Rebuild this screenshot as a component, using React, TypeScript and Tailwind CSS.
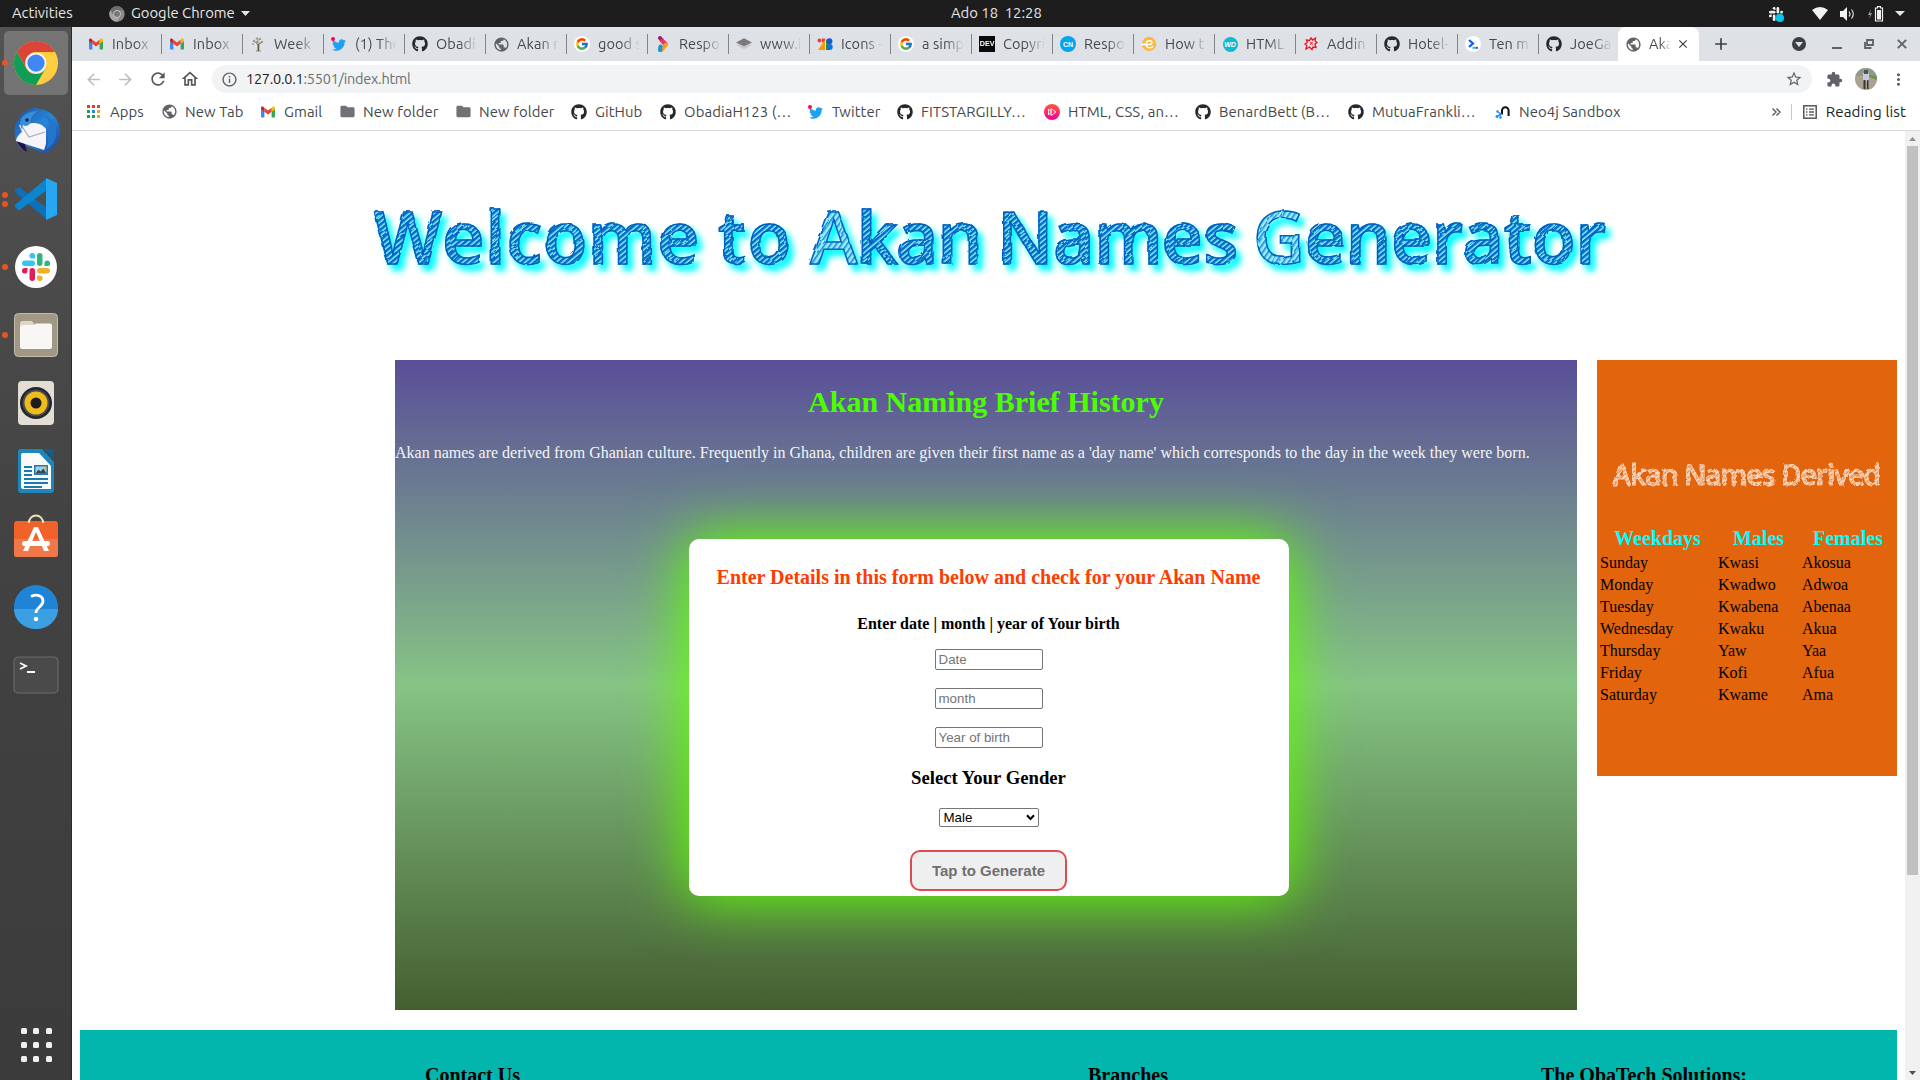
import React from "react";
import { FaGithub, FaTwitter } from "react-icons/fa";
import { FcGoogle } from "react-icons/fc";
import {
  MdPublic,
  MdRefresh,
  MdOutlineHome,
  MdStarBorder,
  MdExtension,
  MdMoreVert,
  MdInfoOutline,
  MdFolder,
  MdArrowBack,
  MdArrowForward,
  MdClose,
  MdAdd,
} from "react-icons/md";

/* ---------- small brand icons ---------- */

const Gmail = () => (
  <svg width="16" height="16" viewBox="0 0 16 16">
    <path d="M1 4.200v8.200c0 .6.5 1 1 1h2.400V7.600L1 5z" fill="#4285f4" />
    <path d="M11.600 13.400H14c.6 0 1-.5 1-1V4.600l-3.400 2.800z" fill="#34a853" />
    <path d="M11.600 3.900v3.900L15 5.200V4c0-1.400-1.500-2-2.500-1.200z" fill="#fbbc04" />
    <path d="M4.400 7.700V3.700L8 6.400l3.600-2.700v4L8 10.500z" fill="#ea4335" />
    <path d="M1 4v1.200l3.400 2.600V3.700l-.9-.8C2.500 2.200 1 2.700 1 4z" fill="#c5221f" />
  </svg>
);
const Github = () => <FaGithub size={16} color="#24292e" />;
const Globe = () => <MdPublic size={17} color="#5f6368" className="shrink-0" />;
const Twitter = () => (
  <span className="relative top-px flex">
    <FaTwitter size={14} color="#1da1f2" />
    <span className="absolute -left-px -top-px size-[4px] rounded-full bg-[#f5075f]" />
  </span>
);
const Google = () => (
  <span className="flex size-4 items-center justify-center rounded-full bg-white">
    <FcGoogle size={14} />
  </span>
);
const Tree = () => (
  <svg width="16" height="16" viewBox="0 0 16 16">
    <g fill="#a3a38c">
      <circle cx="4" cy="5" r="1.300" /><circle cx="7" cy="2.500" r="1.300" /><circle cx="10" cy="3" r="1.300" />
      <circle cx="12" cy="6" r="1.200" /><circle cx="3" cy="8" r="1" /><circle cx="7" cy="6" r="1.200" /><circle cx="10" cy="7" r="1" />
    </g>
    <path d="M8 15V8M8 9L4 5M8 9l4-3M8 8V3M6 15h5" stroke="#857a64" strokeWidth=".8" fill="none" />
    <path d="M7.700 8h1.600v7H7.700z" fill="#6b5a45" />
  </svg>
);
const Chevron = () => (
  <svg width="16" height="16" viewBox="0 0 16 16">
    <path d="M5 2l5 6" stroke="#a02070" strokeWidth="4" strokeLinecap="round" />
    <path d="M7 5l4 3" stroke="#ee3a5a" strokeWidth="4" strokeLinecap="round" />
    <path d="M11 8.500L6.500 14" stroke="#ff9a20" strokeWidth="4" strokeLinecap="round" />
    <path d="M5.500 10.500L5 14" stroke="#1793d8" strokeWidth="4" strokeLinecap="round" />
  </svg>
);
const Layers = () => (
  <svg width="17" height="16" viewBox="0 0 17 16">
    <path d="M0 9l8.500-3.500L17 9l-8.500 4.500z" fill="#c9c9c9" />
    <path d="M0 6.500L8.500 2 17 6.500 8.500 10.500z" fill="#7a7a7a" />
  </svg>
);
const Iconify = () => (
  <svg width="16" height="16" viewBox="0 0 16 16">
    <circle cx="2.500" cy="4.500" r="2" fill="#ea4335" />
    <path d="M5 2.500h3v4H5z" fill="#ea4335" />
    <path d="M1 14L8 4v10z" fill="#ff9800" />
    <path d="M9 2.500l3 5.500-3 6z" fill="#1e9e45" />
    <circle cx="12.500" cy="5.200" r="2.900" fill="#1a55d8" />
    <path d="M9 9h4v5H9z" fill="#1e8e3e" />
    <circle cx="12.800" cy="11" r="2.900" fill="#0a72e0" />
  </svg>
);
const Dev = () => (
  <span className="flex size-4 items-center justify-center bg-[#0a0a0a]">
    <span className="scale-x-90 font-['Liberation_Sans',sans-serif] text-[8px] font-bold leading-none text-white">DEV</span>
  </span>
);
const Cn = () => (
  <span className="flex size-4 items-center justify-center rounded-full bg-[#03a5f0] font-['Liberation_Sans',sans-serif] text-[7px] font-bold leading-none text-white">
    CN
  </span>
);
const Educative = () => (
  <svg width="16" height="16" viewBox="0 0 16 16">
    <circle cx="8" cy="8" r="7.200" fill="#fdb843" />
    <path d="M0 8.500h8c4 0 3.800-3.800.8-3.800-4.800 0-4.800 7 0 7 1.600 0 2.600-.6 3.400-1.500" stroke="#fff" strokeWidth="1.400" fill="none" />
  </svg>
);
const Wd = () => (
  <span className="flex size-[15px] items-center justify-center rounded-full bg-[#0fb9cf] font-['Liberation_Sans',sans-serif] text-[7px] font-bold italic leading-none text-white">
    WD
  </span>
);
const Star = () => (
  <svg width="16" height="16" viewBox="0 0 16 16">
    <path
      d="M8 2l1.500 2L12.500 2 12 5 14 6.500 12 8l1 3.500-3-.5L9 13.500 6.500 11 3 13l.8-3.500L2 8l2.300-1.500L3.500 4l3 .5z"
      fill="none" stroke="#ee1122" strokeWidth="1.300"
    />
    <path d="M7 6l3 2.500M9.500 6L7 9" stroke="#ee1122" strokeWidth=".9" />
  </svg>
);
const Prompt = () => (
  <span className="flex size-4 items-center justify-center rounded-full bg-white">
    <svg width="12" height="12" viewBox="0 0 12 12">
      <path d="M2 2l4 3.500L2 9" stroke="#0a5cf5" strokeWidth="2.200" fill="none" />
      <path d="M5.500 9.800h3" stroke="#15c8e8" strokeWidth="2" />
      <path d="M8.500 9.800H11" stroke="#8a2be2" strokeWidth="2" />
    </svg>
  </span>
);
const PlayIcon = () => (
  <svg width="16" height="16" viewBox="0 0 16 16">
    <defs>
      <linearGradient id="play" x1="0" y1="0" x2="0" y2="1">
        <stop offset="0" stopColor="#ff5a3c" />
        <stop offset="1" stopColor="#f5009a" />
      </linearGradient>
    </defs>
    <circle cx="8" cy="8" r="8" fill="url(#play)" />
    <path d="M7 4.500v7L12 8zM4.500 5v6M4.500 5l3 3-3 3" stroke="#fff" strokeWidth=".9" fill="none" />
  </svg>
);
const Neo = () => (
  <svg width="16" height="16" viewBox="0 0 16 16">
    <path d="M7 10.500V6.500a3.300 3.300 0 016.600 0V12" stroke="#111" strokeWidth="2" fill="none" />
    <path d="M3 8l3 2L2 12.500M5 10L5.500 13.500" stroke="#1a8cff" strokeWidth="1.200" fill="none" />
    <circle cx="2.500" cy="7.500" r="1.200" fill="#1a8cff" /><circle cx="5.500" cy="10" r="1.200" fill="#1a8cff" />
    <circle cx="2" cy="12.500" r="1.500" fill="#1a8cff" /><circle cx="5.500" cy="13.500" r="1.200" fill="#1a8cff" />
  </svg>
);
const AppsGrid = () => (
  <svg width="14" height="14" viewBox="0 0 14 14">
    <path d="M0 0h3v3H0zM5 0h3v3H5zM10 0h3v3h-3z" fill="#ea3a30" />
    <path d="M0 5h3v3H0z" fill="#1e9e58" /><path d="M5 5h3v3H5z" fill="#2a80f0" /><path d="M10 5h3v3h-3z" fill="#f9a01b" />
    <path d="M0 10h3v3H0zM5 10h3v3H5z" fill="#1e9e58" /><path d="M10 10h3v3h-3z" fill="#f9a01b" />
  </svg>
);
const Folder = () => <MdFolder size={17} color="#6e7175" className="shrink-0" />;

/* ---------- dock icons ---------- */

const Chrome = ({ size, mono = false }: { size: number; mono?: boolean }) => (
  <svg width={size} height={size} viewBox="0 0 48 48">
    <circle cx="24" cy="24" r="23" fill={mono ? "#8a8a8a" : "#ffcd40"} />
    <path d="M4.100 12.500A23 23 0 0143.900 12.500H24a11.500 11.500 0 00-10 17.200z" fill={mono ? "#6f6f6f" : "#db4437"} />
    <path d="M4.100 12.500A23 23 0 0024 47l10-17.300a11.500 11.500 0 01-20 0z" fill={mono ? "#a5a5a5" : "#0f9d58"} />
    <circle cx="24" cy="24" r="11" fill={mono ? "#d0d0d0" : "#f1f1f1"} />
    <circle cx="24" cy="24" r="9" fill={mono ? "#777" : "#4285f4"} />
  </svg>
);
const Thunderbird = () => (
  <svg width="48" height="48" viewBox="0 0 48 48">
    <defs>
      <linearGradient id="tb" x1="0" y1="0" x2="1" y2="1">
        <stop offset="0" stopColor="#1a4fa8" /><stop offset=".5" stopColor="#2a86d8" /><stop offset="1" stopColor="#1c3f9a" />
      </linearGradient>
    </defs>
    <path d="M3 20C1 31 6 42 15 45l-3-7 20 8c9-2 16-11 16-22C48 12 39 3 27 2c-2-2-7-1-8 0C12 4 9 7 8 11c-3 3-5 6-5 9z" fill="url(#tb)" />
    <path d="M4 32c2 6 6 11 11 13l-2-8z" fill="#20124d" />
    <path d="M7 18l14-2c6 0 10 2 13 6v15l-2 6L4 34c0-3 4-8 6-9z" fill="#f5f5f7" />
    <path d="M9 18l8 12 16-5" stroke="#aab" strokeWidth="1.200" fill="none" />
    <path d="M8 17c0-8 8-13 18-13-5 3-7 6-8 12-1 3-5 4-7 2l-1 5z" fill="#3a8fd8" />
    <path d="M30 8c8 4 10 12 4 20 4 4 2 10 0 14 8-4 11-12 10-18C44 15 38 9 30 8z" fill="#2277cc" />
    <circle cx="15" cy="13" r="1.800" fill="#1a2350" />
  </svg>
);
const VsCode = () => (
  <svg width="44" height="44" viewBox="0 0 44 44">
    <path d="M1 13l4-3 28 21v12L1 15z" fill="#0f6fb8" />
    <path d="M1 30l4 3.500L33 13V1L1 28z" fill="#0a85d0" />
    <path d="M32 1l11 5v32l-11 5z" fill="#27a6f2" />
  </svg>
);
const Slack = ({ size, white = false }: { size: number; white?: boolean }) => {
  const c = white ? ["#eee", "#eee", "#eee", "#eee"] : ["#36c5f0", "#2eb67d", "#ecb22e", "#e01e5a"];
  return (
    <svg width={size} height={size} viewBox="0 0 28 28">
      <g fill={c[0]}><rect x="0" y="7.500" width="13" height="5.500" rx="2.750" /><path d="M13 5.500H10.200A2.800 2.800 0 1113 2.700z" /></g>
      <g fill={c[1]}><rect x="15" y="0" width="5.500" height="13" rx="2.750" /><path d="M22.500 13v-2.800a2.800 2.800 0 112.800 2.800z" /></g>
      <g fill={c[2]}><rect x="15" y="15" width="13" height="5.500" rx="2.750" /><path d="M15 22.500h2.800a2.800 2.800 0 11-2.800 2.800z" /></g>
      <g fill={c[3]}><rect x="7.500" y="15" width="5.500" height="13" rx="2.750" /><path d="M5.500 15v2.800A2.800 2.800 0 112.700 15z" /></g>
    </svg>
  );
};
const Files = () => (
  <svg width="44" height="44" viewBox="0 0 44 44">
    <rect x=".5" y=".5" width="43" height="43" rx="4" fill="#a09884" stroke="#c4bca8" />
    <path d="M6 11q0-3 2-3h10l3 4h-4v4H6z" fill="#dcd6c8" />
    <path d="M6 14q0-2 2-2h12l2-1.500h14q2 0 2 2V34q0 2-2 2H8q-2 0-2-2z" fill="#f8f7f6" />
  </svg>
);
const Rhythmbox = () => (
  <svg width="36" height="44" viewBox="0 0 36 44">
    <rect width="36" height="44" rx="4" fill="#e2ded3" />
    <circle cx="18" cy="22" r="16" fill="#25252d" /><circle cx="18" cy="22" r="13.500" fill="#4a4a50" />
    <circle cx="18" cy="22" r="11.500" fill="#eebc1c" /><circle cx="18" cy="22" r="5.500" fill="#1e1e1e" />
  </svg>
);
const Writer = () => (
  <svg width="36" height="44" viewBox="0 0 36 44">
    <path d="M3 0h21l12 13v28q0 3-3 3H3q-3 0-3-3V3q0-3 3-3z" fill="#1c86bd" />
    <path d="M26 0h10v10z" fill="#0c5f90" />
    <path d="M5 4h16l12 13v23H5q-2 0-2-2V6q0-2 2-2z" fill="#f8fafa" />
    <path d="M6 18h8M6 22h8M6 26h8M6 30h24M6 34h24M6 38h18" stroke="#1c7ab0" strokeWidth="2" />
    <rect x="16" y="16" width="14" height="10" fill="#1c7ab0" /><rect x="17.500" y="17.500" width="11" height="7" fill="#9fd0ee" />
    <path d="M17.500 24.500l3-4 2 2 3-3 3 5z" fill="#444" />
    <path d="M25 17.500h3.500V21z" fill="#e8b020" />
  </svg>
);
const Software = () => (
  <svg width="44" height="44" viewBox="0 0 44 44" className="relative -top-[3px]">
    <path d="M15 9C15-1 29-1 29 9" stroke="#f6dfb4" strokeWidth="2" fill="none" />
    <rect y="7" width="44" height="36" rx="3" fill="#f0622a" /><path d="M0 25h44v15q0 3-3 3H3q-3 0-3-3z" fill="#f07848" />
    <path d="M15 9V6.500M29 9V6.500" stroke="#f6dfb4" strokeWidth="2" />
    <path d="M20 13h4l11 24h-5l-8-19-8 19H9z" fill="#fff" /><rect x="8" y="27" width="28" height="5" rx="2.500" fill="#fff" />
  </svg>
);
const Help = () => (
  <svg width="44" height="44" viewBox="0 0 44 44">
    <circle cx="22" cy="22" r="22" fill="#1f84d6" /><path d="M0 24a22 20 0 0044 0z" fill="#3b9fe2" />
    <path d="M17 11.500c6-3 12-.5 12 4.500 0 6-7 6-7 12" stroke="#fff" strokeWidth="2.800" fill="none" />
    <circle cx="22" cy="34" r="2.300" fill="#fff" />
  </svg>
);
const Terminal = () => (
  <svg width="46" height="38" viewBox="0 0 46 38">
    <rect x="1" y="1" width="44" height="36" rx="4" fill="#4a4a4a" stroke="#6c6c6c" />
    <path d="M7 7l6 3-6 3M14 16h8" stroke="#fff" strokeWidth="1.800" fill="none" />
  </svg>
);

const dock = [
  { icon: <Chrome size={46} />, dots: 1, active: true },
  { icon: <Thunderbird />, dots: 0 },
  { icon: <VsCode />, dots: 2 },
  {
    icon: (
      <span className="flex size-[42px] items-center justify-center rounded-full bg-white">
        <Slack size={28} />
      </span>
    ),
    dots: 1,
  },
  { icon: <Files />, dots: 1 },
  { icon: <Rhythmbox />, dots: 0 },
  { icon: <Writer />, dots: 0 },
  { icon: <Software />, dots: 0 },
  { icon: <Help />, dots: 0 },
  { icon: <Terminal />, dots: 0 },
];

const tabs: [React.ReactNode, string][] = [
  [<Gmail />, "Inbox"], [<Gmail />, "Inbox"], [<Tree />, "Week"], [<Twitter />, "(1) The"], [<Github />, "Obadi"],
  [<Globe />, "Akan n"], [<Google />, "good s"], [<Chevron />, "Respo"], [<Layers />, "www.i"], [<Iconify />, "Icons -"],
  [<Google />, "a simp"], [<Dev />, "Copyri"], [<Cn />, "Respo"], [<Educative />, "How t"], [<Wd />, "HTML"],
  [<Star />, "Addin"], [<Github />, "Hotel-"], [<Prompt />, "Ten m"], [<Github />, "JoeGa"],
];

const bookmarks: [React.ReactNode, string, string][] = [
  [<AppsGrid />, "Apps", "w-[75px]"],
  [<Globe />, "New Tab", "w-[99px]"],
  [<Gmail />, "Gmail", "w-[79px]"],
  [<Folder />, "New folder", "w-[116px]"],
  [<Folder />, "New folder", "w-[116px]"],
  [<Github />, "GitHub", "w-[89px]"],
  [<Github />, "ObadiaH123 (…", "w-[148px]"],
  [<Twitter />, "Twitter", "w-[89px]"],
  [<Github />, "FITSTARGILLY…", "w-[147px]"],
  [<PlayIcon />, "HTML, CSS, an…", "w-[151px]"],
  [<Github />, "BenardBett (B…", "w-[153px]"],
  [<Github />, "MutuaFrankli…", "w-[147px]"],
  [<Neo />, "Neo4j Sandbox", "w-[160px]"],
];

const names = [
  ["Sunday", "Kwasi", "Akosua"], ["Monday", "Kwadwo", "Adwoa"], ["Tuesday", "Kwabena", "Abenaa"],
  ["Wednesday", "Kwaku", "Akua"], ["Thursday", "Yaw", "Yaa"], ["Friday", "Kofi", "Afua"], ["Saturday", "Kwame", "Ama"],
];

const hatch =
  "bg-[repeating-linear-gradient(140deg,#0a62c0_0px,#0a74cc_1.400px,#35c4f0_2.200px,#9af2fd_3.200px,#0a62c0_4px)] bg-clip-text text-transparent [-webkit-text-stroke:1.500px_#0660c0]";
const lightHatch =
  "bg-[repeating-linear-gradient(125deg,#1c86d2_0px,#5fd6f6_1.400px,#b4f6ff_3.200px,#1c86d2_4.500px)] bg-clip-text text-transparent [-webkit-text-stroke:1.500px_#0660c0]";

/* [lightly shaded capital, remaining letters, slot classes] */
const titleWords: [string, string, string][] = [
  ["", "Welcome", "w-[344px] tracking-[1px]"],
  ["", "to", "w-[92px] tracking-[1px]"],
  ["A", "kan", "w-[187px] tracking-[-1px]"],
  ["", "Names", "w-[256px] tracking-[-0.500px]"],
  ["G", "enerator", "w-[400px] tracking-[-0.500px]"],
];

function TopBar() {
  return (
    <header className="flex h-[27px] shrink-0 items-center bg-[#1d1d1d] text-[14.800px] text-[#e6e6e6]">
      <div className="w-[109px] pl-3">Activities</div>
      <div className="flex w-[842px] items-center gap-[6px]">
        <Chrome size={16} mono />
        <span>Google Chrome</span>
        <svg width="9" height="5"><path d="M0 0h9L4.500 5z" fill="#e6e6e6" /></svg>
      </div>
      <div className="flex-1 whitespace-pre">Ado 18  12:28</div>
      <div className="flex items-center pr-[15px]">
        <span className="relative mr-[29px] flex">
          <Slack size={14} white />
          <span className="absolute -bottom-px -right-px size-[8px] rounded-full bg-[#00c8f5]" />
        </span>
        <svg width="16" height="13" viewBox="0 0 16 13" className="mr-3"><path d="M0 3Q8-3 16 3L8 13z" fill="#f2f2f2" /></svg>
        <svg width="16" height="14" viewBox="0 0 16 14" className="mr-3">
          <path d="M0 4h3l4-4v14l-4-4H0z" fill="#f2f2f2" />
          <path d="M9 4.500q2 2.500 0 5M11.500 2.500q3.500 4.500 0 9" stroke="#d8d8d8" strokeWidth="1.200" fill="none" />
        </svg>
        <svg width="16" height="16" viewBox="0 0 16 16" className="mr-[11px]">
          <path d="M3 3L0 9h2l-1 4 3-6H2z" fill="#999" />
          <path d="M7.500 2h2V.7h3V2h2v13h-7z" stroke="#f2f2f2" strokeWidth="1.200" fill="none" />
          <path d="M9 4h4v9.500H9z" fill="#f2f2f2" />
        </svg>
        <svg width="10" height="5"><path d="M0 0h10L5 5z" fill="#e6e6e6" /></svg>
      </div>
    </header>
  );
}

function Dock() {
  return (
    <nav className="flex w-[72px] shrink-0 flex-col border-r border-[#2b2b2b] bg-gradient-to-b from-[#535353] via-[#424242] to-[#3b3b3b] pt-[2px]">
      {dock.map((d, i) => (
        <div key={i} className="flex h-[68px] items-center">
          <div className="flex h-16 w-1 flex-col items-center justify-center">
            <div className="relative left-[3px] flex flex-col gap-[3px]">
              {Array.from({ length: d.dots }).map((_, k) => (
                <span key={k} className="size-[6px] rounded-full bg-[#e95420]" />
              ))}
            </div>
          </div>
          <div className={d.active ? "flex size-16 items-center justify-center rounded-[5px] bg-white/20" : "flex size-16 items-center justify-center"}>
            {d.icon}
          </div>
        </div>
      ))}
      <div className="mt-auto mb-[18px] ml-[21px] grid w-[31px] grid-cols-3 gap-x-[6px] gap-y-[6px]">
        {Array.from({ length: 9 }).map((_, i) => (
          <span key={i} className="mt-[2px] size-[6px] rounded-[1.500px] bg-[#f0f0f0]" />
        ))}
      </div>
    </nav>
  );
}

function TabStrip() {
  return (
    <div className="flex h-[34px] items-end bg-[#dee1e6] pl-[9px]">
      {tabs.map(([icon, label], i) => (
        <div key={i} className="flex h-[34px] w-[81px] shrink-0 items-center">
          <span className="ml-[7px] flex w-4 items-center justify-center">{icon}</span>
          <span className="ml-2 w-[42px] overflow-hidden whitespace-nowrap text-[14.500px] tracking-[0.100px] text-[#45494d] [mask-image:linear-gradient(to_right,black_55%,transparent)]">
            {label}
          </span>
          <span className={i < 18 ? "ml-auto h-5 w-px bg-[#808387]" : "ml-auto h-5 w-px"} />
        </div>
      ))}
      <div className="-ml-[2px] flex h-[34px] w-[81px] shrink-0 items-center rounded-t-[8px] bg-white">
        <span className="ml-[7px] flex w-4 justify-center"><Globe /></span>
        <span className="ml-2 w-[22px] overflow-hidden text-[14.500px] text-[#45494d] [mask-image:linear-gradient(to_right,black_50%,transparent)]">Aka</span>
        <MdClose size={14} color="#3c4043" className="ml-[5px]" />
      </div>
      <div className="flex h-[34px] flex-1 items-center text-[#3c4043]">
        <MdAdd size={20} className="ml-[12px]" />
        <span className="ml-[61px] flex size-[14px] items-center justify-center rounded-full bg-[#3c4043]">
          <svg width="8" height="5"><path d="M0 0h8L4 5z" fill="#dee1e6" /></svg>
        </span>
        <span className="ml-[26px] mt-2 h-[2px] w-[10px] bg-[#5f6368]" />
        <svg width="10" height="10" viewBox="0 0 10 10" className="ml-[22px]">
          <path d="M3 1h6v5H3z M1 3v6h6.500" stroke="#5f6368" strokeWidth="1.800" fill="none" />
        </svg>
        <svg width="10" height="10" viewBox="0 0 10 10" className="ml-[23px]">
          <path d="M.8.8l8.400 8.400M9.200.8L.8 9.200" stroke="#5f6368" strokeWidth="1.900" />
        </svg>
      </div>
    </div>
  );
}

function Toolbar() {
  return (
    <div className="flex h-9 items-center bg-white">
      <MdArrowBack size={19} color="#bcbec0" className="ml-3" />
      <MdArrowForward size={19} color="#bcbec0" className="ml-[13px]" />
      <MdRefresh size={20} color="#54585c" className="ml-[13px]" />
      <MdOutlineHome size={20} color="#54585c" className="ml-[12px]" />
      <div className="ml-[12px] flex h-7 w-[1600px] items-center rounded-full bg-[#f1f3f4] text-[14.500px]">
        <MdInfoOutline size={17} color="#5f6368" className="ml-[9px]" />
        <span className="ml-2 tracking-[-0.250px] text-[#202124]">127.0.0.1<span className="text-[#6b6f73]">:5501/index.html</span></span>
        <MdStarBorder size={18} color="#5f6368" className="ml-auto mr-[9px]" />
      </div>
      <MdExtension size={17} color="#5f6368" className="ml-[14px]" />
      <svg width="22" height="22" viewBox="0 0 22 22" className="ml-[12px] rounded-full">
        <path d="M0 0h22v22H0z" fill="#aaa292" /><path d="M0 0h22v8H0z" fill="#8f9a8c" /><path d="M14 7l8 1v4l-8-3z" fill="#6f9450" />
        <path d="M8 5h6v8H8z" fill="#c5cbd8" /><path d="M9 2h4v4H9z" fill="#55504c" /><path d="M8.500 12h2v9h-2zM12 12h1.500v9H12z" fill="#35353b" />
      </svg>
      <MdMoreVert size={19} color="#5f6368" className="ml-[12px]" />
    </div>
  );
}

function Bookmarks() {
  return (
    <div className="flex h-[34px] items-center border-b border-[#d9dadf] bg-white pb-[3px] pl-[14px] text-[14.900px] tracking-[0.080px] text-[#45494d]">
      {bookmarks.map(([icon, label, w], i) => (
        <div key={i} className={`flex shrink-0 items-center gap-2 whitespace-nowrap ${w}`}>
          <span className="flex w-4 shrink-0 justify-center">{icon}</span>
          <span>{label}</span>
        </div>
      ))}
      <div className="ml-auto flex items-center pr-[14px]">
        <svg width="9" height="8" viewBox="0 0 9 8"><path d="M.5.5L4 4 .5 7.500M4.500.5L8 4 4.500 7.500" stroke="#5f6368" strokeWidth="1.500" fill="none" /></svg>
        <span className="ml-[10px] h-4 w-px bg-[#c6c8cc]" />
        <svg width="14" height="14" viewBox="0 0 14 14" className="ml-[11px]">
          <rect x=".8" y=".8" width="12.400" height="12.400" stroke="#54585c" strokeWidth="1.500" fill="none" />
          <path d="M3 4.200h1.500M3 7h1.500M3 9.800h1.500M6 4.200h5M6 7h5M6 9.800h5" stroke="#54585c" strokeWidth="1.300" />
        </svg>
        <span className="ml-[9px] text-[15.200px] text-[#202124]">Reading list</span>
      </div>
    </div>
  );
}

function NameForm() {
  const field =
    "h-[21px] w-[108px] rounded-[2px] border border-[#767676] bg-white px-[3px] font-['Liberation_Sans',sans-serif] text-[13.333px] leading-none text-black placeholder:text-[#757575]";
  return (
    <form className="mx-auto mt-[77px] flex h-[357px] w-[600px] flex-col items-center rounded-[10px] bg-white pr-px shadow-[0_0_60px_3px_#5eff00]">
      <h2 className="mt-[27px] h-[23px] whitespace-nowrap text-[20px] font-bold leading-[23px] text-[#ff3c00]">
        Enter Details in this form below and check for your Akan Name
      </h2>
      <h4 className="mt-[26px] h-[18px] text-[16px] font-bold leading-[18px]">Enter date | month | year of Your birth</h4>
      <input className={`mt-[16px] ${field}`} placeholder="Date" />
      <input className={`mt-[18px] ${field}`} placeholder="month" />
      <input className={`mt-[18px] ${field}`} placeholder="Year of birth" />
      <h3 className="mt-[19px] h-[22px] text-[18.720px] font-bold leading-[22px]">Select Your Gender</h3>
      <div className="mt-[19px] flex h-[19px] w-[100px] items-center justify-between rounded-[2px] border border-[#767676] bg-white pl-[4px] pr-[3px] font-['Liberation_Sans',sans-serif] text-[13.333px] leading-none">
        <span>Male</span>
        <svg width="9" height="7" viewBox="0 0 9 7"><path d="M1 1.300l3.500 3.700L8 1.300" stroke="#000" strokeWidth="2" fill="none" /></svg>
      </div>
      <button className="mt-[23px] h-[41px] w-[157px] rounded-[10px] border-2 border-[#de4b50] bg-[#efefef] pt-px font-['Liberation_Sans',sans-serif] text-[15px] font-bold text-[#707070]">
        Tap to Generate
      </button>
    </form>
  );
}

function Page() {
  return (
    <main className="flex h-[949px] w-[1833px] flex-col overflow-hidden bg-white font-['Liberation_Serif',serif] text-black">
      <svg width="0" height="0" className="absolute">
        <filter id="sketch"><feTurbulence baseFrequency="0.06" numOctaves="2" seed="4" /><feDisplacementMap in="SourceGraphic" scale="3" /></filter>
        <filter id="sketch-fine"><feTurbulence baseFrequency="0.12" numOctaves="2" seed="2" /><feDisplacementMap in="SourceGraphic" scale="1.500" /></filter>
      </svg>
      <h1 className="flex h-[229px] shrink-0 whitespace-nowrap pl-[301px] pt-[54px] font-['Open_Sans',sans-serif] text-[72px] font-semibold leading-[100px] [filter:url(#sketch)_drop-shadow(5px_6px_3px_#00f6ff)]">
        {titleWords.map(([lead, rest, cls]) => (
          <span key={rest} className={`shrink-0 ${cls}`}>
            {lead && <span className={lightHatch}>{lead}</span>}
            <span className={hatch}>{rest}</span>
          </span>
        ))}
      </h1>
      <div className="flex shrink-0 items-start pl-[323px]">
        <section className="h-[650px] w-[1182px] bg-[linear-gradient(#594e98,#86c485_50%,#445e30)]">
          <h2 className="pt-[25px] text-center text-[30px] font-bold leading-[34px] text-[#4cff00]">Akan Naming Brief History</h2>
          <p className="mt-[25px] whitespace-nowrap text-[16px] leading-[18px] text-[#f5f5f5]">
            Akan names are derived from Ghanian culture. Frequently in Ghana, children are given their first name as a 'day name' which corresponds to the day in the week they were born.
          </p>
          <div className="pl-[6px]"><NameForm /></div>
        </section>
        <aside className="ml-5 h-[416px] w-[300px] bg-[#e2650d]">
          <h2 className="whitespace-nowrap pr-[2px] pt-[93px] text-center font-['Open_Sans',sans-serif] text-[28px] font-semibold leading-[42px] tracking-[-0.850px] [filter:url(#sketch-fine)]">
            <span className="bg-[repeating-linear-gradient(140deg,#fbe3d2_0px,#f3b48a_1.500px,#e98a48_2.500px,#fbe3d2_3.500px)] bg-clip-text text-transparent [-webkit-text-stroke:0.500px_#f9dfcc]">Akan Names Derived</span>
          </h2>
          <div className="mt-[31px] grid grid-cols-[118px_84px_95px] pl-[3px]">
            {["Weekdays", "Males", "Females"].map((h) => (
              <b key={h} className="h-[26px] pr-[3px] text-center text-[20px] leading-[24px] text-[#00ffff]">{h}</b>
            ))}
            {names.flat().map((n, i) => (
              <span key={i} className="h-[22px] text-[16px] leading-[22px]">{n}</span>
            ))}
          </div>
        </aside>
      </div>
      <footer className="ml-2 mt-5 flex h-[400px] w-[1817px] shrink-0 bg-[#02b5ad] pt-[33px] text-[20px] font-bold leading-[24px]">
        <div className="w-[664px] pl-[345px]">Contact Us</div>
        <div className="w-[797px] pl-[344px]">Branches</div>
        <div>The ObaTech Solutions:</div>
      </footer>
    </main>
  );
}

function Scrollbar() {
  return (
    <div className="flex w-[15px] flex-col items-center bg-[#f1f1f1]">
      <svg width="7" height="4" className="mt-[6px]"><path d="M0 4h7L3.500 0z" fill="#8f8f8f" /></svg>
      <div className="mt-[5px] h-[729px] w-[11px] bg-[#c1c1c1]" />
      <svg width="7" height="4" className="mb-[5px] mt-auto"><path d="M0 0h7L3.500 4z" fill="#505050" /></svg>
    </div>
  );
}

export default function App() {
  return (
    <div className="flex h-[1080px] w-[1920px] flex-col overflow-hidden font-['Ubuntu','Noto_Sans',sans-serif]">
      <TopBar />
      <div className="flex min-h-0 flex-1">
        <Dock />
        <div className="flex w-[1848px] flex-col">
          <TabStrip />
          <Toolbar />
          <Bookmarks />
          <div className="flex min-h-0 flex-1">
            <Page />
            <Scrollbar />
          </div>
        </div>
      </div>
    </div>
  );
}
